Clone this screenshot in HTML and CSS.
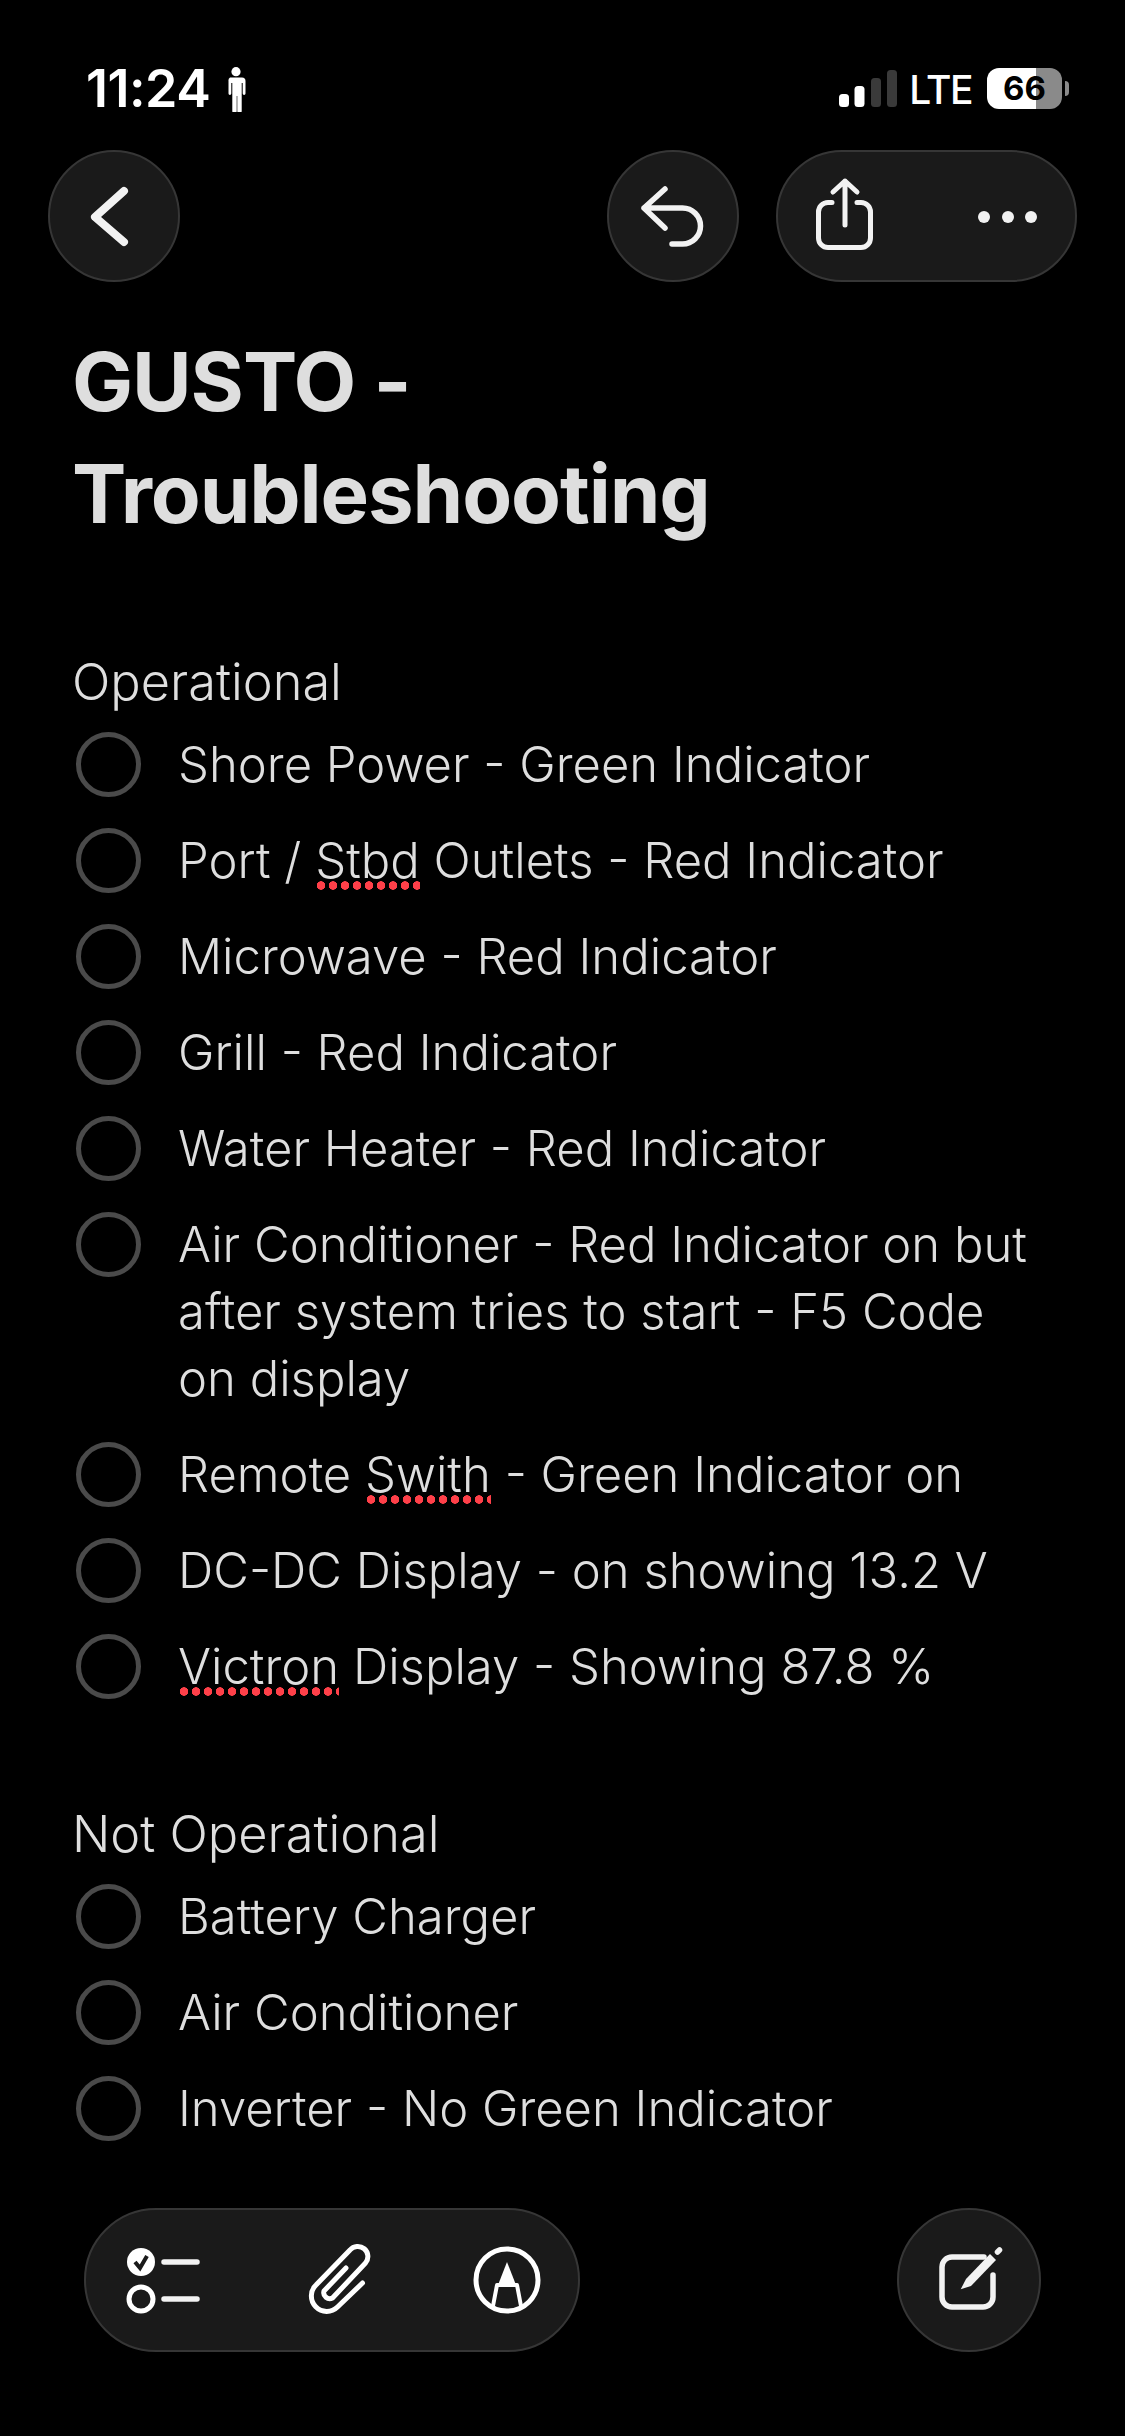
FILE: index.html
```html
<!DOCTYPE html>
<html lang="en">
<head>
  <meta charset="UTF-8">
  <meta name="viewport" content="width=device-width, initial-scale=1.0">
  <title>GUSTO - Troubleshooting</title>
  <link rel="stylesheet" href="styles.css">
</head>
<body>
  <div class="status-bar">
    <div class="status-left">
      <span class="clock">11:24</span>
      <svg class="person" viewBox="0 0 20 45">
        <circle cx="10" cy="4.7" r="4.6"/>
        <path d="M4 10.5h12a3.5 3.5 0 0 1 3.5 3.5v12.5a1.4 1.4 0 0 1-2.8 0V16h-1v28a2.2 2.2 0 0 1-4.4 0V29h-.6v15a2.2 2.2 0 0 1-4.4 0V16h-1v10.5a1.4 1.4 0 0 1-2.8 0V14A3.5 3.5 0 0 1 4 10.5z"/>
      </svg>
    </div>
    <div class="status-right">
      <svg class="signal" viewBox="0 0 58 37">
        <rect x="0" y="24" width="10" height="13" rx="3.5" fill="#fff"/>
        <rect x="15.500" y="16" width="10" height="21" rx="3.5" fill="#fff"/>
        <rect x="32" y="8" width="10" height="29" rx="3.5" fill="#3a3a3a"/>
        <rect x="48" y="0" width="10" height="37" rx="3.5" fill="#3a3a3a"/>
      </svg>
      <span class="network">LTE</span>
      <div class="battery">66</div>
    </div>
  </div>

  <div class="toolbar">
    <div class="round-btn">
      <svg class="icon" viewBox="0 0 132 132">
        <path class="line thick" d="M76 41 47 67l29 25"/>
      </svg>
    </div>
    <div class="toolbar-right">
      <div class="round-btn">
        <svg class="icon" viewBox="0 0 132 132">
          <path class="line" d="M58 39 37 58l21 20M37 58h38.500a18 18 0 0 1 0 36H65"/>
        </svg>
      </div>
      <div class="pill-btn">
        <svg class="icon" viewBox="0 0 301 132">
          <path class="line slim" d="M56 52.500h-4a9.500 9.500 0 0 0-9.500 9.500v26a9.500 9.500 0 0 0 9.500 9.500h33a9.500 9.500 0 0 0 9.500-9.500V62a9.500 9.500 0 0 0-9.500-9.500h-4M69 75V31M57 42l12-11 12 11"/>
          <circle class="dot" cx="208" cy="67" r="6"/>
          <circle class="dot" cx="232" cy="67" r="6"/>
          <circle class="dot" cx="255" cy="67" r="6"/>
        </svg>
      </div>
    </div>
  </div>

  <h1 class="note-title">GUSTO -<br>Troubleshooting</h1>

  <div class="note-section">
    <p class="section-label">Operational</p>
    <ul class="checklist">
      <li>Shore Power - Green Indicator</li>
      <li>Port / <span class="typo">Stbd</span> Outlets - Red Indicator</li>
      <li>Microwave - Red Indicator</li>
      <li>Grill - Red Indicator</li>
      <li>Water Heater - Red Indicator</li>
      <li>Air Conditioner - Red Indicator on but after system tries to start - F5 Code on display</li>
      <li>Remote <span class="typo">Swith</span> - Green Indicator on</li>
      <li>DC-DC Display - on showing 13.2 V</li>
      <li><span class="typo">Victron</span> Display - Showing 87.8 %</li>
    </ul>
  </div>

  <div class="note-section">
    <p class="section-label">Not Operational</p>
    <ul class="checklist">
      <li>Battery Charger</li>
      <li>Air Conditioner</li>
      <li>Inverter - No Green Indicator</li>
    </ul>
  </div>

  <div class="bottom-bar">
    <div class="pill-btn tools">
      <svg class="icon" viewBox="0 0 496 144">
        <circle cx="57" cy="54" r="14" fill="#fff"/>
        <path class="check" d="M51 54l5 6 7-12"/>
        <circle class="line thin" cx="57" cy="91" r="12"/>
        <path class="line" d="M80 54h33M80 91h33"/>
        <path class="line thin" d="M262 60 240 83a6 6 0 0 0 8.500 7l33-35a9.500 9.500 0 0 0-15.500-13l-34 35a15 15 0 0 0 21.500 22l25-24"/>
        <circle class="line thin" cx="423" cy="72" r="31"/>
        <path class="nib" d="M423 54l9 23h-18z"/>
        <path class="line nib-legs" d="M413 77h20M413 77l-4 21M433 77l4 21"/>
      </svg>
    </div>
    <div class="round-btn compose">
      <svg class="icon" viewBox="0 0 144 144">
        <path class="line square" d="M87 49H55a10 10 0 0 0-10 10v30a10 10 0 0 0 10 10h31a10 10 0 0 0 10-10V67"/>
        <path class="dot" d="M63.700 81.300 69 71l24-25 6 6-25 26z"/>
        <path class="line" d="M100.500 44l2-2"/>
      </svg>
    </div>
  </div>
</body>
</html>
```

FILE: styles.css
```css
*, *::before, *::after {
  box-sizing: border-box;
}
body {
  background-color: #000;
  color: #dedede;
  font-family: Inter, "Liberation Sans", sans-serif;
  margin: 0;
  width: 1125px;
  height: 2436px;
  overflow: hidden;
  display: flex;
  flex-direction: column;
}
.status-bar {
  height: 150px;
  padding: 66px 56px 0 86px;
  display: flex;
  justify-content: space-between;
  align-items: flex-start;
  color: #fff;
}
.status-left {
  display: flex;
  align-items: flex-start;
  gap: 16px;
}
.clock {
  font-size: 52px;
  font-weight: 600;
  line-height: 46px;
  letter-spacing: -0.5px;
}
.person {
  width: 20px;
  height: 45px;
  margin-top: 1px;
  fill: #fff;
}
.status-right {
  display: flex;
  align-items: flex-start;
}
.signal {
  width: 58px;
  height: 37px;
  margin-top: 4px;
}
.network {
  font-size: 39px;
  font-weight: 500;
  line-height: 48px;
  margin-left: 12px;
  letter-spacing: -1.5px;
}
.battery {
  position: relative;
  width: 75px;
  height: 41px;
  margin: 2px 7px 0 15px;
  border-radius: 12px;
  background: linear-gradient(90deg, #fff 66%, #8a8a8a 66%);
  color: #000;
  font-size: 33px;
  font-weight: 700;
  line-height: 41px;
  text-align: center;
}
.battery::after {
  content: "";
  position: absolute;
  right: -7px;
  top: 13px;
  width: 4px;
  height: 15px;
  border-radius: 0 4px 4px 0;
  background-color: #8a8a8a;
}
.toolbar {
  padding: 0 48px;
  display: flex;
  justify-content: space-between;
}
.toolbar-right {
  display: flex;
  gap: 37px;
}
.round-btn,
.pill-btn {
  height: 132px;
  background-color: #1a1a1a;
  border: 2px solid #363636;
  border-radius: 72px;
  flex: none;
}
.round-btn {
  width: 132px;
}
.pill-btn {
  width: 301px;
}
.icon {
  display: block;
  margin: -2px;
  width: calc(100% + 4px);
  height: calc(100% + 4px);
}
.line {
  fill: none;
  stroke: #f2f2f2;
  stroke-width: 5.5;
  stroke-linecap: round;
  stroke-linejoin: round;
}
.line.thick {
  stroke-width: 8;
}
.line.slim {
  stroke-width: 5;
}
.line.thin {
  stroke: #fff;
  stroke-width: 5;
}
.dot {
  fill: #f2f2f2;
}
.check {
  fill: none;
  stroke: #1a1a1a;
  stroke-width: 4;
}
.nib {
  fill: #fff;
}
.nib-legs {
  stroke: #fff;
  stroke-width: 4;
}
.note-title {
  margin: 44px 0 0 72px;
  font-size: 81.5px;
  font-weight: 700;
  line-height: 112px;
  letter-spacing: -1.1px;
}
.note-section {
  padding: 0 73px;
}
.note-section + .note-section {
  margin-top: 71px;
}
.note-title + .note-section {
  margin-top: 98px;
}
.section-label {
  margin: 0 0 16px -1px;
  font-size: 50.5px;
  font-weight: 300;
  line-height: 67px;
}
.checklist {
  list-style: none;
  margin: 0;
  padding: 0;
}
.checklist li {
  position: relative;
  padding: 0 0 29px 105px;
  font-size: 49px;
  font-weight: 300;
  line-height: 67px;
}
.checklist li::before {
  content: "";
  position: absolute;
  left: 3px;
  top: 1px;
  width: 65px;
  height: 65px;
  border: 5px solid #4a4a4a;
  border-radius: 50%;
}
.typo {
  position: relative;
}
.typo::after {
  content: "";
  position: absolute;
  left: 0;
  right: 0;
  bottom: 0;
  height: 9px;
  background: radial-gradient(circle, #ff4049 4px, transparent 4.5px) 0 0 / 12px 9px repeat-x;
}
.bottom-bar {
  margin-top: auto;
  padding: 0 84px 84px;
  display: flex;
  justify-content: space-between;
}
.pill-btn.tools {
  width: 496px;
  height: 144px;
}
.round-btn.compose {
  width: 144px;
  height: 144px;
}
```
